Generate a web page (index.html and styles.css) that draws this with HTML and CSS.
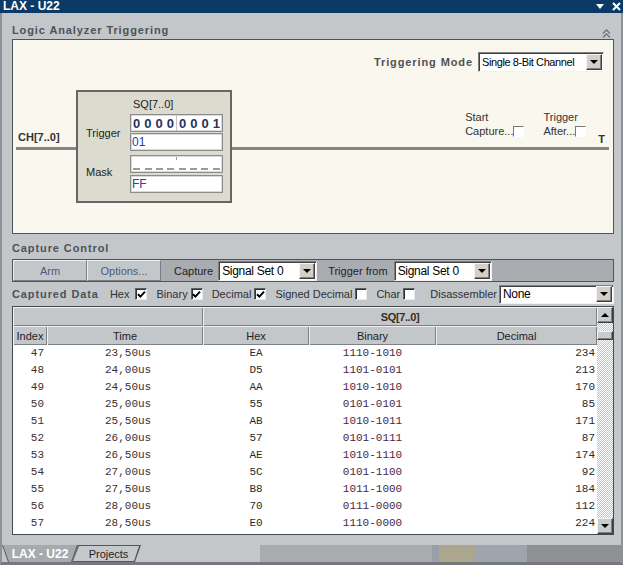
FILE: index.html
```html
<!DOCTYPE html>
<html>
<head>
<meta charset="utf-8">
<title>LAX - U22</title>
<link rel="stylesheet" href="styles.css">
</head>
<body>
<div class="titlebar">
  <span class="title">LAX - U22</span>
  <span class="tb-icons">
    <svg width="8" height="6" viewBox="0 0 8 6"><path d="M0 0H8L4 5Z" fill="#fff"/></svg>
    <svg width="9" height="9" viewBox="0 0 9 9"><path d="M1 1L8 8M8 1L1 8" stroke="#fff" stroke-width="2" fill="none"/></svg>
  </span>
</div>
<div class="window">
  <div class="main">
    <div class="section-head">
      <span>Logic Analyzer Triggering</span>
      <svg class="chev" width="9" height="9" viewBox="0 0 9 9"><path d="M1 4.5L4.5 1L8 4.5M1 8.5L4.5 5L8 8.5" fill="none" stroke="#6f7478" stroke-width="1.4"/></svg>
    </div>
    <div class="trig-panel">
      <div class="mode-row">
        <span class="mode-label">Triggering Mode</span>
        <div class="select sel-mode"><span class="sel-text">Single 8-Bit Channel</span><span class="dd"><i class="arr-down"></i></span></div>
      </div>
      <div class="diagram">
        <div class="seg-left">
          <span class="ch-label">CH[7..0]</span>
          <div class="wire"></div>
        </div>
        <div class="tbox">
          <span></span>
          <span class="sq-label">SQ[7..0]</span>
          <span class="tb-label">Trigger</span>
          <div class="fgroup">
            <div class="field bits">
              <div class="half"><b>0</b><b>0</b><b>0</b><b>0</b></div>
              <div class="half"><b>0</b><b>0</b><b>0</b><b>1</b></div>
            </div>
            <div class="field val">01</div>
          </div>
          <span class="tb-label">Mask</span>
          <div class="fgroup fg-mask">
            <div class="field mask">
              <div class="half"><i></i><i></i><i></i><i></i></div>
              <div class="half"><i></i><i></i><i></i><i></i></div>
            </div>
            <div class="field val">FF</div>
          </div>
        </div>
        <div class="seg-right">
          <div class="opts">
            <div class="opt opt-start"><span>Start</span><span class="opt-line">Capture...<span class="cb small"></span></span></div>
            <div class="opt opt-after"><span>Trigger</span><span class="opt-line">After...<span class="cb small"></span></span></div>
            <span class="t-mark">T</span>
          </div>
          <div class="wire"></div>
        </div>
      </div>
    </div>

    <div class="section-head h-capture"><span>Capture Control</span></div>
    <div class="ctrl-bar">
      <div class="btn btn-arm">Arm</div>
      <div class="btn btn-opt">Options...</div>
      <span class="bar-label">Capture</span>
      <div class="select sel-capture"><span class="sel-text">Signal Set 0</span><span class="dd"><i class="arr-down"></i></span></div>
      <span class="bar-label bl-trig">Trigger from</span>
      <div class="select sel-trigger"><span class="sel-text">Signal Set 0</span><span class="dd"><i class="arr-down"></i></span></div>
    </div>

    <div class="data-row">
      <span class="section-title">Captured Data</span>
      <span class="chk chk-hex">Hex<span class="cb"><svg width="9" height="9" viewBox="0 0 9 9"><path d="M1 4.2L3.4 6.6L8 1.6" fill="none" stroke="#000" stroke-width="2"/></svg></span></span>
      <span class="chk">Binary<span class="cb"><svg width="9" height="9" viewBox="0 0 9 9"><path d="M1 4.2L3.4 6.6L8 1.6" fill="none" stroke="#000" stroke-width="2"/></svg></span></span>
      <span class="chk">Decimal<span class="cb"><svg width="9" height="9" viewBox="0 0 9 9"><path d="M1 4.2L3.4 6.6L8 1.6" fill="none" stroke="#000" stroke-width="2"/></svg></span></span>
      <span class="chk">Signed Decimal<span class="cb"></span></span>
      <span class="chk">Char<span class="cb"></span></span>
      <span class="dis">Disassembler</span>
      <div class="select sel-dis"><span class="sel-text">None</span><span class="dd"><i class="arr-down"></i></span></div>
    </div>

    <div class="grid-wrap">
      <div class="grid">
        <table>
          <colgroup><col class="c1"><col class="c2"><col class="c3"><col class="c4"><col class="c5"></colgroup>
          <thead>
            <tr><th colspan="2"></th><th colspan="3" class="sq">SQ[7..0]</th></tr>
            <tr><th>Index</th><th>Time</th><th>Hex</th><th>Binary</th><th>Decimal</th></tr>
          </thead>
          <tbody>
            <tr><td class="i">47</td><td class="t">23,50us</td><td class="h">EA</td><td class="b">1110-1010</td><td class="d">234</td></tr>
            <tr><td class="i">48</td><td class="t">24,00us</td><td class="h">D5</td><td class="b">1101-0101</td><td class="d">213</td></tr>
            <tr><td class="i">49</td><td class="t">24,50us</td><td class="h">AA</td><td class="b">1010-1010</td><td class="d">170</td></tr>
            <tr><td class="i">50</td><td class="t">25,00us</td><td class="h">55</td><td class="b">0101-0101</td><td class="d">85</td></tr>
            <tr><td class="i">51</td><td class="t">25,50us</td><td class="h">AB</td><td class="b">1010-1011</td><td class="d">171</td></tr>
            <tr><td class="i">52</td><td class="t">26,00us</td><td class="h">57</td><td class="b">0101-0111</td><td class="d">87</td></tr>
            <tr><td class="i">53</td><td class="t">26,50us</td><td class="h">AE</td><td class="b">1010-1110</td><td class="d">174</td></tr>
            <tr><td class="i">54</td><td class="t">27,00us</td><td class="h">5C</td><td class="b">0101-1100</td><td class="d">92</td></tr>
            <tr><td class="i">55</td><td class="t">27,50us</td><td class="h">B8</td><td class="b">1011-1000</td><td class="d">184</td></tr>
            <tr><td class="i">56</td><td class="t">28,00us</td><td class="h">70</td><td class="b">0111-0000</td><td class="d">112</td></tr>
            <tr><td class="i">57</td><td class="t">28,50us</td><td class="h">E0</td><td class="b">1110-0000</td><td class="d">224</td></tr>
          </tbody>
        </table>
      </div>
      <div class="vscroll">
        <div class="sb-btn"><i class="arr-up"></i></div>
        <div class="sb-thumb"></div>
        <div class="sb-track"></div>
        <div class="sb-btn"><i class="arr-down"></i></div>
      </div>
    </div>
  </div>

  <div class="tabstrip">
    <div class="tabs">
      <div class="tab tab-active"><div class="tab-fill">LAX - U22</div></div>
      <div class="tab tab-proj"><div class="tab-fill">Projects</div></div>
    </div>
    <div class="seg s1"></div>
    <div class="seg s2"></div>
    <div class="seg s3"></div>
    <div class="seg s4"></div>
    <div class="seg s5"></div>
  </div>
</div>
</body>
</html>
```

FILE: styles.css
```css
* { box-sizing: border-box; }
html, body { margin: 0; padding: 0; }
body {
  width: 623px;
  height: 565px;
  overflow: hidden;
  background: #c3c7ca;
  font-family: "Liberation Sans", Arial, sans-serif;
  font-size: 11px;
  color: #333;
}

/* title bar */
.titlebar {
  height: 13px;
  background: #0b3a66;
  display: flex;
  align-items: center;
  justify-content: space-between;
  padding: 0 2px 0 3px;
  color: #fff;
  font-weight: bold;
  font-size: 12px;
  line-height: 13px;
}
.tb-icons { display: flex; align-items: center; gap: 8px; }

.window {
  height: 552px;
  border-left: 2px solid #8e9296;
  border-right: 2px solid #8e9296;
  border-bottom: 3px solid #75797d;
  display: flex;
  flex-direction: column;
}
.main {
  height: 532px;
  padding: 0 7px 0 10px;
  display: flex;
  flex-direction: column;
}

.section-head {
  height: 26px;
  padding-top: 11px;
  line-height: 13px;
  font-weight: bold;
  letter-spacing: 0.9px;
  color: #4e5256;
  display: flex;
  justify-content: space-between;
  align-items: flex-start;
}
.chev { margin-top: 5px; margin-right: 3px; }
.h-capture { height: 25px; padding-top: 8px; }
.section-title {
  font-weight: bold;
  letter-spacing: 0.9px;
  color: #4e5256;
}

/* trigger panel */
.trig-panel {
  height: 195px;
  border: 1px solid #505458;
  background: #faf7ee;
}
.mode-row {
  display: flex;
  justify-content: flex-end;
  align-items: center;
  gap: 5px;
  height: 20px;
  margin-top: 12px;
  padding-right: 9px;
}
.mode-label {
  font-weight: bold;
  letter-spacing: 0.9px;
  color: #4e5256;
}

.select {
  height: 20px;
  background: #fff;
  border: 1px solid;
  border-color: #808080 #f2f2f2 #f2f2f2 #808080;
  box-shadow: inset 1px 1px 0 #404040;
  display: flex;
  align-items: center;
  padding-left: 3px;
  font-size: 12px;
  letter-spacing: -0.3px;
  color: #000;
}
.sel-text { flex: 1; white-space: nowrap; overflow: hidden; }
.dd {
  width: 16px;
  height: 16px;
  margin-right: 1px;
  background: #d4d0c8;
  border: 1px solid;
  border-color: #f6f6f6 #404040 #404040 #f6f6f6;
  box-shadow: inset -1px -1px 0 #808080;
  display: flex;
  align-items: center;
  justify-content: center;
}
.arr-down {
  width: 0; height: 0;
  border-left: 4px solid transparent;
  border-right: 4px solid transparent;
  border-top: 4px solid #000;
}
.arr-up {
  width: 0; height: 0;
  border-left: 4px solid transparent;
  border-right: 4px solid transparent;
  border-bottom: 4px solid #000;
}
.sel-mode { width: 126px; font-size: 11px; letter-spacing: -0.4px; }

.diagram { display: flex; margin-top: 18px; height: 113px; }
.seg-left {
  width: 60px;
  margin-left: 3px;
  padding-top: 40px;
  display: flex;
  flex-direction: column;
}
.ch-label {
  font-weight: bold;
  line-height: 14px;
  padding-left: 2px;
  margin-bottom: 3px;
  color: #333;
}
.wire { height: 3px; background: #858585; }

.tbox {
  width: 156px;
  height: 113px;
  border: 2px solid #666;
  background: #dcdbcf;
  display: grid;
  grid-template-columns: 44px 93px;
  align-content: start;
  padding: 5px 0 0 8px;
  color: #222;
}
.sq-label { line-height: 14px; margin-bottom: 3px; padding-left: 3px; }
.tb-label { align-self: center; }
.fgroup { display: flex; flex-direction: column; gap: 1px; }
.fg-mask { margin-top: 4px; gap: 2px; }
.field {
  height: 18px;
  background: #fff;
  border: 1px solid #8c8c8c;
  box-shadow: inset 0 0 0 1px #dadada;
}
.bits, .mask { display: flex; }
.half {
  flex: 1;
  display: flex;
  justify-content: space-around;
  align-items: center;
}
.bits .half:first-child { border-right: 1px solid #c4c4c4; }
.bits b { font-size: 13px; font-weight: bold; color: #25345e; }
.mask {
  background: linear-gradient(#999, #999) no-repeat 50% 1px / 1px 3px, #fff;
}
.mask .half { align-items: flex-end; padding-bottom: 2px; }
.mask i { width: 7px; height: 2px; background: #9a9a9a; }
.val {
  color: #2a40a8;
  font-size: 12px;
  line-height: 16px;
  padding-left: 1px;
}

.seg-right {
  flex: 1;
  margin-right: 4px;
  display: flex;
  flex-direction: column;
}
.opts {
  height: 57px;
  display: flex;
  justify-content: flex-end;
  align-items: flex-end;
}
.opt {
  display: flex;
  flex-direction: column;
  line-height: 14px;
  margin-bottom: 9px;
  color: #333;
}
.opt-line { display: flex; align-items: center; }
.opt-start { margin-right: 19px; }
.opt-after { margin-right: 12px; }
.t-mark {
  font-weight: bold;
  line-height: 14px;
  margin-bottom: 1px;
  margin-right: 4px;
  color: #333;
}

.cb {
  width: 12px;
  height: 12px;
  background: #fff;
  border: 1px solid;
  border-color: #606060 #e8e8e8 #e8e8e8 #606060;
  box-shadow: inset 1px 1px 0 #303030;
  display: inline-flex;
  align-items: center;
  justify-content: center;
  flex: none;
}
.cb.small {
  width: 11px;
  height: 11px;
  border-color: #777 #fff #fff #777;
  box-shadow: none;
}

/* capture control bar */
.ctrl-bar {
  height: 23px;
  border: 1px solid #4f5357;
  background: #a9adb1;
  display: flex;
  align-items: center;
}
.btn {
  width: 74px;
  height: 21px;
  background: #c3c7ca;
  border: 1px solid;
  border-color: #eef0f2 #7a7e82 #7a7e82 #eef0f2;
  display: flex;
  align-items: center;
  justify-content: center;
  color: #4d5a7c;
}
.bar-label { margin-left: 13px; margin-right: 5px; color: #222; }
.bl-trig { margin-left: 11px; margin-right: 6px; }
.sel-capture { width: 99px; }
.sel-trigger { width: 98px; }

/* captured data row */
.data-row {
  height: 24px;
  display: flex;
  align-items: center;
}
.chk {
  display: flex;
  align-items: center;
  gap: 3px;
  margin-left: 9px;
  color: #2d3135;
}
.chk-hex { margin-left: 11px; gap: 6px; }
.dis { margin-left: auto; margin-right: 2px; color: #2d3135; }
.sel-dis { width: 115px; height: 19px; }

/* table */
.grid-wrap {
  height: 229px;
  border: 1px solid #45494d;
  background: #fff;
  display: flex;
}
.grid { width: 584px; overflow: hidden; }
table {
  border-collapse: separate;
  border-spacing: 0;
  table-layout: fixed;
  width: 584px;
}
col.c1 { width: 34px; }
col.c2 { width: 156px; }
col.c3 { width: 106px; }
col.c4 { width: 127px; }
col.c5 { width: 161px; }
th {
  height: 19px;
  padding: 0;
  background: #c3c7ca;
  box-shadow: inset 1px 1px 0 #eef0f2, inset -1px -1px 0 #7d8185;
  font-weight: normal;
  font-size: 11px;
  color: #222;
  text-align: center;
}
th.sq {
  font-weight: bold;
  font-size: 11px;
  letter-spacing: -0.4px;
  color: #3b2c1c;
}
td {
  height: 17px;
  padding: 0;
  font-family: "Liberation Mono", "Courier New", monospace;
  font-size: 11px;
  line-height: 17px;
  color: #3a3030;
  white-space: nowrap;
}
td.i { text-align: right; padding-right: 3px; }
td.t { padding-left: 58px; }
td.h { text-align: center; color: #2a2a2a; }
td.b { text-align: center; color: #4a2648; }
td.d { text-align: right; padding-right: 2px; color: #2a2a2a; }

.vscroll {
  width: 16px;
  display: flex;
  flex-direction: column;
  background-color: #fff;
  background-image: repeating-conic-gradient(#c4c4c4 0 25%, #fff 0 50%);
  background-size: 2px 2px;
}
.sb-btn, .sb-thumb {
  background: #c8ccce;
  border: 1px solid;
  border-color: #f4f4f4 #404040 #404040 #f4f4f4;
  box-shadow: inset -1px -1px 0 #808080;
}
.sb-btn {
  height: 16px;
  display: flex;
  align-items: center;
  justify-content: center;
}
.sb-thumb { height: 9px; margin-top: 8px; }
.sb-track { flex: 1; }

/* bottom tab strip */
.tabstrip {
  height: 17px;
  display: flex;
  background: #c3c7ca;
}
.tabs { width: 258px; display: flex; }
.tab { height: 17px; background: #55595d; }
.tab-fill {
  width: 100%;
  height: 100%;
  display: flex;
  align-items: center;
  justify-content: center;
}
.tab-active {
  width: 76px;
  position: relative;
  z-index: 1;
  clip-path: polygon(0 0, 76px 0, 70px 17px, 6px 17px);
}
.tab-active .tab-fill {
  background: #a6aaad;
  clip-path: polygon(1px 0, 75px 0, 69px 17px, 7px 17px);
  color: #fff;
  font-weight: bold;
  font-size: 12px;
}
.tab-proj {
  width: 69px;
  margin-left: -6px;
  clip-path: polygon(0 17px, 6px 0, 69px 0, 63px 17px);
}
.tab-proj .tab-fill {
  background: #c5c9cb;
  clip-path: polygon(1px 16px, 7px 1px, 67px 1px, 62px 16px);
  color: #222;
  padding-left: 4px;
}
.seg { height: 17px; }
.s1 { width: 172px; background: #a9acaf; }
.s2 { width: 7px; background: #9aa0a8; }
.s3 { width: 36px; background: #aca68f; }
.s4 { width: 52px; background: #a0a5ad; }
.s5 { flex: 1; background: #8e9194; }
```
